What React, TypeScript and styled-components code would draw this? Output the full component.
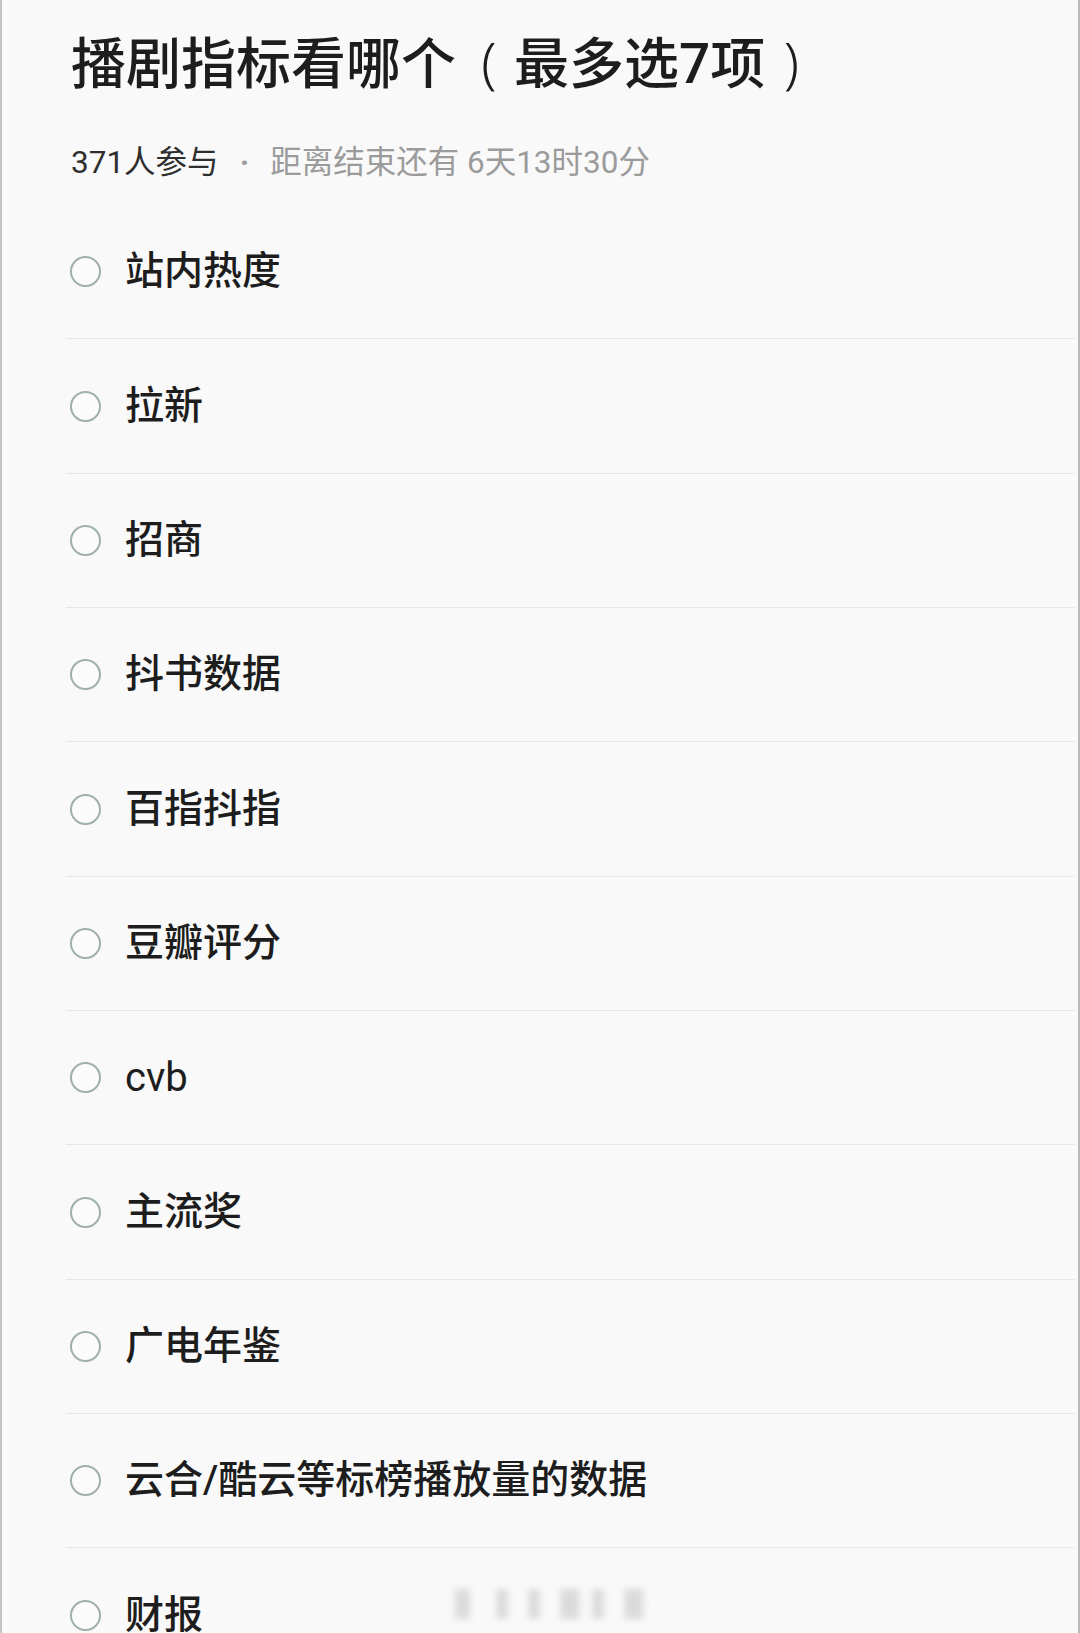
import React from "react";
import styled, { createGlobalStyle } from "styled-components";

const TEXT_COLOR = "#1d1d1d";
const MUTED_COLOR = "#9b9b9b";
const LINE_COLOR = "#e6e6e6";
const PAGE_BACKGROUND = "#f9f9f9";
const FONT_STACK = `Roboto, "Noto Sans CJK SC", "Noto Sans", sans-serif`;

const GlobalStyle = createGlobalStyle`
  html, body {
    margin: 0;
    padding: 0;
    background: ${PAGE_BACKGROUND};
    overflow: hidden;
  }
  * {
    box-sizing: border-box;
  }
`;

const Page = styled.div`
  position: relative;
  width: 1080px;
  height: 1633px;
  overflow: hidden;
  background: ${PAGE_BACKGROUND};
  border-left: 2px solid #c4c4c4;
  border-right: 2px solid #b9b9b9;
  font-family: ${FONT_STACK};
  color: ${TEXT_COLOR};
`;

const Header = styled.div`
  padding: 34px 0 0 69px;
  display: flex;
  flex-direction: column;
`;

const Title = styled.h1`
  margin: 0;
  height: 55px;
  font-size: 55px;
  line-height: 55px;
  font-weight: 500;
  white-space: nowrap;
`;

// the full-width brackets sit centred in their own cell in the source font
const Bracket = styled.span<{ $closing?: boolean }>`
  display: inline-block;
  width: 58px;
  line-height: 55px;
  text-align: center;
  padding: ${(p) => (p.$closing ? "0 6px 0 0" : "0 0 0 8px")};
  font-family: "Noto Sans", sans-serif;
  font-weight: 300;
`;

const Meta = styled.div`
  margin-top: 58px;
  display: flex;
  align-items: center;
  font-size: 31.5px;
  line-height: 31px;
  color: ${MUTED_COLOR};
`;

const Count = styled.span`
  color: #2e2e2e;
`;

const Dot = styled.span`
  margin: 0 21px;
  font-weight: 700;
`;

const OptionList = styled.ul`
  list-style: none;
  margin: 27px 3px 0 64px;
  padding: 0;
`;

const OptionRow = styled.li`
  height: 134.35px;
  display: flex;
  align-items: center;
  gap: 24px;
  padding-left: 4px;
  border-bottom: 1px solid ${LINE_COLOR};
`;

const Radio = styled.span`
  flex: none;
  width: 31px;
  height: 31px;
  border-radius: 50%;
  border: 2px solid #9fb0a7;
  background: #fbfbfb;
`;

const OptionLabel = styled.span<{ $latin?: boolean }>`
  font-size: ${(p) => (p.$latin ? "40px" : "39px")};
  line-height: 39px;
  font-weight: ${(p) => (p.$latin ? 400 : 500)};
  color: ${TEXT_COLOR};
`;

const Watermark = styled.div`
  position: absolute;
  left: 453px;
  top: 1587px;
  width: 180px;
  height: 36px;
  font-size: 30px;
  line-height: 36px;
  color: #dadada;
  filter: blur(3.5px);
  letter-spacing: 2px;
  white-space: nowrap;
`;

const options = [
  "站内热度",
  "拉新",
  "招商",
  "抖书数据",
  "百指抖指",
  "豆瓣评分",
  "cvb",
  "主流奖",
  "广电年鉴",
  "云合/酷云等标榜播放量的数据",
  "财报",
];

const App = () => (
  <>
    <GlobalStyle />
    <Page>
      <Header>
        <Title>
          播剧指标看哪个<Bracket>(</Bracket>最多选7项
          <Bracket $closing>)</Bracket>
        </Title>
        <Meta>
          <Count>371人参与</Count>
          <Dot>·</Dot>
          <span>距离结束还有 6天13时30分</span>
        </Meta>
      </Header>
      <OptionList>
        {options.map((label) => (
          <OptionRow key={label}>
            <Radio />
            <OptionLabel $latin={/^[a-z]+$/i.test(label)}>{label}</OptionLabel>
          </OptionRow>
        ))}
      </OptionList>
      <Watermark>▌ ▍▍▋▍▋</Watermark>
    </Page>
  </>
);

export default App;
